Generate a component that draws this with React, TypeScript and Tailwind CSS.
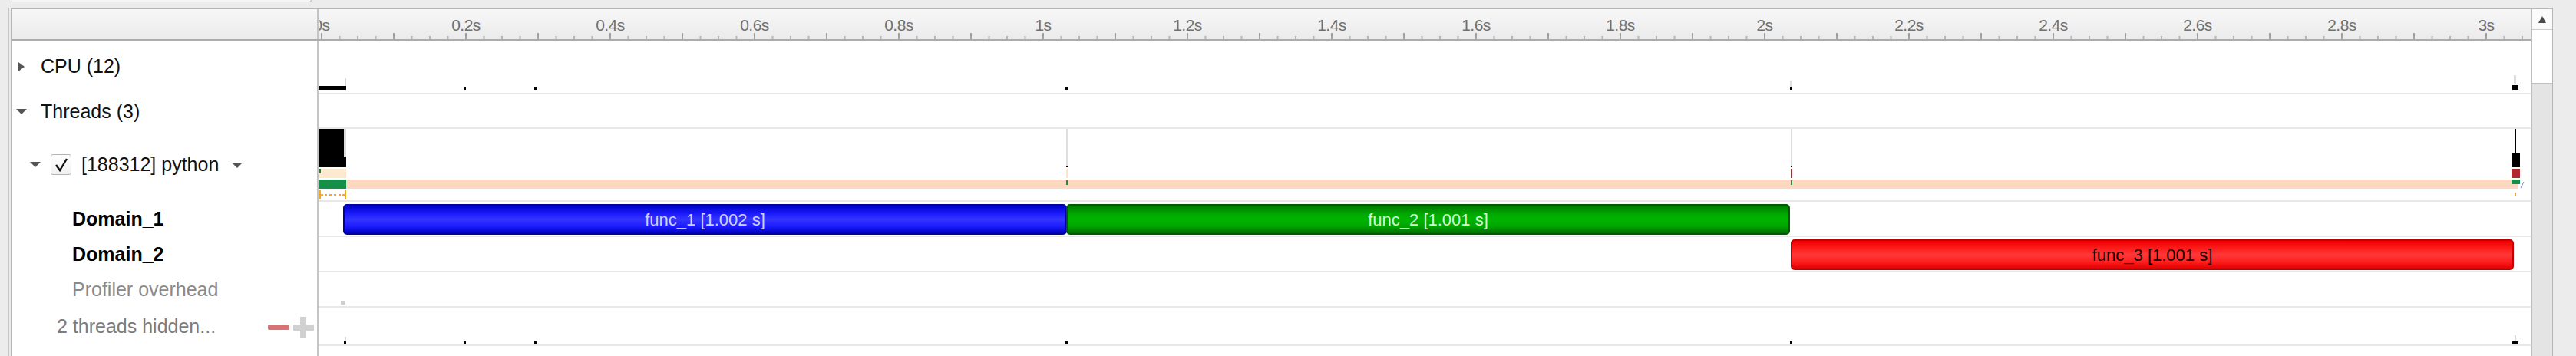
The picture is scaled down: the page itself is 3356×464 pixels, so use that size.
import React from "react";

// page x of the timeline's left edge; 0s sits 4px in, 940px per second
const ORIGIN = 418;
const PX_PER_S = 940;
const t2x = (t: number) => 4 + PX_PER_S * t;
const p = (pageX: number) => pageX - ORIGIN;

interface Slice {
  id: number;
  name: string;
  from: number;
  to: number;
  kind: "blue" | "green" | "red";
}

const slices: Slice[] = [
  { id: 1, name: "func_1 [1.002 s]", from: 450, to: 1393, kind: "blue" },
  { id: 2, name: "func_2 [1.001 s]", from: 1392, to: 2335, kind: "green" },
  { id: 3, name: "func_3 [1.001 s]", from: 2336, to: 3278, kind: "red" },
];

const sliceStyles = {
  blue: "border-[#0000a0] bg-[linear-gradient(to_bottom,#0000c8_0%,#1c1cff_30%,#3636ff_50%,#1c1cff_75%,#0000c0_100%)] text-[#cfcfff]",
  green:
    "border-[#005a00] bg-[linear-gradient(to_bottom,#007a00_0%,#00a800_30%,#00b400_50%,#00a400_75%,#007000_100%)] text-[#d0f5d0]",
  red: "border-[#c00000] bg-[linear-gradient(to_bottom,#f00000_0%,#ff2020_30%,#ff3838_50%,#ff2020_75%,#e00000_100%)] text-[#220000]",
};

const labels = [0, 0.2, 0.4, 0.6, 0.8, 1, 1.2, 1.4, 1.6, 1.8, 2, 2.2, 2.4, 2.6, 2.8, 3];

// little marks: [pageX, width, top, height, colour]
type Mark = [number, number, number, number, string];

const cpuMarks: Mark[] = [
  [418, 36, 59, 5, "#000"],
  [452, 2, 49, 10, "#d6d6d6"],
  [607, 3, 61, 3, "#000"],
  [699, 3, 61, 3, "#000"],
  [1391, 3, 61, 3, "#000"],
  [2335, 3, 61, 3, "#000"],
  [2335, 2, 52, 8, "#dedede"],
  [3278, 3, 45, 12, "#dedede"],
  [3276, 8, 58, 6, "#000"],
];

const threadMarks: Mark[] = [
  [418, 33, 0, 36, "#000"],
  [451, 3, 0, 36, "#dcdcdc"],
  [418, 36, 36, 14, "#000"],
  [418, 36, 52, 12, "#fde9cf"],
  [418, 3, 52, 6, "#2f7d32"],
  [418, 2865, 66, 12, "#fbd8bf"],
  [418, 36, 66, 12, "#168f48"],
  [1392, 2, 0, 48, "#dedede"],
  [1392, 2, 48, 2, "#000"],
  [1392, 2, 52, 12, "#fde6c8"],
  [1392, 2, 67, 6, "#168f48"],
  [2336, 2, 0, 48, "#dedede"],
  [2336, 2, 48, 2, "#000"],
  [2336, 2, 52, 12, "#b0282f"],
  [2336, 2, 67, 6, "#168f48"],
  [3279, 2, 0, 32, "#000"],
  [3275, 11, 32, 18, "#000"],
  [3275, 11, 52, 12, "#b0282f"],
  [3275, 11, 66, 6, "#168f48"],
  [3279, 2, 83, 5, "#f0a830"],
];

const hiddenMarks: Mark[] = [
  [452, 2, 38, 6, "#dadada"],
  [451, 3, 44, 3, "#000"],
  [607, 3, 44, 3, "#000"],
  [699, 3, 44, 3, "#000"],
  [1391, 3, 44, 3, "#000"],
  [2335, 3, 44, 3, "#000"],
  [3279, 2, 36, 8, "#dadada"],
  [3276, 8, 44, 3, "#000"],
];

function Marks({ marks }: { marks: Mark[] }) {
  return (
    <>
      {marks.map(([x, w, top, h, c], i) => (
        <div
          key={i}
          className="absolute"
          style={{ left: p(x), width: w, top, height: h, background: c }}
        />
      ))}
    </>
  );
}

function Tri({ dir }: { dir: "right" | "down" }) {
  return dir === "right" ? (
    <svg width="10" height="14" viewBox="0 0 10 14" className="shrink-0">
      <polygon points="1,1 9,7 1,13" fill="#555" />
    </svg>
  ) : (
    <svg width="14" height="8" viewBox="0 0 14 8" className="shrink-0">
      <polygon points="0,0 14,0 7,7" fill="#555" />
    </svg>
  );
}

function Row({
  h,
  left,
  children,
}: {
  h: string;
  left?: React.ReactNode;
  children?: React.ReactNode;
}) {
  return (
    <div className={`flex shrink-0 ${h}`}>
      <div className="w-[399px] shrink-0 border-r-2 border-[#c4c4c4] bg-white flex items-center relative">
        {left}
      </div>
      <div className="flex-1 relative overflow-hidden bg-white border-b-2 border-[#e8e8e8]">
        {children}
      </div>
    </div>
  );
}

function Ruler() {
  const ticks = Array.from({ length: 124 }, (_, i) => i);
  return (
    <div className="flex-1 relative overflow-hidden">
      <svg width="2879" height="39" className="absolute left-0 top-0">
        {ticks.map((i) => {
          const x = t2x(i * 0.025);
          const tall = i % 4 === 0;
          return (
            <rect
              key={i}
              x={x - 1}
              y={tall ? 31 : 35}
              width="2"
              height={tall ? 8 : 4}
              fill={tall ? "#a2a2a2" : "#b4b4b4"}
            />
          );
        })}
      </svg>
      {labels.map((t) => (
        <div
          key={t}
          className="absolute top-[9px] -translate-x-1/2 text-[21px] leading-[24px] text-[#707070] tracking-[-0.5px]"
          style={{ left: t2x(t) }}
        >
          {`${t}s`}
        </div>
      ))}
    </div>
  );
}

export default function App() {
  return (
    <div className="w-[3356px] h-[464px] overflow-hidden bg-[#ececec] flex flex-col font-['Liberation_Sans',Arial,sans-serif]">
      {/* strip above the panel */}
      <div className="h-[10px] shrink-0 flex">
        <div className="ml-[15px] w-[391px] h-[3px] border-l border-r border-b border-[#bcbcbc] rounded-br-[5px] bg-[#f4f4f4]" />
      </div>

      <div className="flex flex-1 min-h-0 ml-[11px] w-[3315px] border-l border-[#c4c4c4] pl-[2px]">
        <div className="flex flex-1 min-w-0 border-l-2 border-t-2 border-r border-[#b6b6b6]">
          {/* main column */}
          <div className="flex-1 flex flex-col min-w-0">
            {/* header */}
            <div className="h-[41px] shrink-0 flex border-b-2 border-[#acacac] bg-[linear-gradient(to_bottom,#f7f7f7,#ebebeb)]">
              <div className="w-[399px] shrink-0 border-r-2 border-[#c4c4c4]" />
              <Ruler />
            </div>

            <Row
              h="h-[70px]"
              left={
                <div className="flex items-center pl-[7px] pb-[2px]">
                  <Tri dir="right" />
                  <span className="ml-[20px] text-[25px] text-[#111]">CPU (12)</span>
                </div>
              }
            >
              <Marks marks={cpuMarks} />
            </Row>

            <Row
              h="h-[45px]"
              left={
                <div className="flex items-center pl-[5px]">
                  <Tri dir="down" />
                  <span className="ml-[18px] text-[25px] text-[#111]">Threads (3)</span>
                </div>
              }
            />

            <Row
              h="h-[95px]"
              left={
                <div className="flex items-center pl-[23px] pb-[2px]">
                  <Tri dir="down" />
                  <div className="ml-[13px] w-[27px] h-[27px] border border-[#b4b4b4] rounded-[3px] bg-[linear-gradient(to_bottom,#ffffff,#f0f0f0)] flex items-center justify-center">
                    <svg width="20" height="20" viewBox="0 0 20 20">
                      <path d="M3 10 L8 17 L17 2" fill="none" stroke="#111" strokeWidth="2.4" />
                    </svg>
                  </div>
                  <span className="ml-[13px] text-[25px] text-[#111]">[188312] python</span>
                  <svg width="12" height="7" viewBox="0 0 12 7" className="ml-[18px] mt-[4px]">
                    <polygon points="0,0 12,0 6,6" fill="#555" />
                  </svg>
                </div>
              }
            >
              <Marks marks={threadMarks} />
              {/* orange bracket */}
              <div
                className="absolute top-[80px] h-[12px] flex items-center"
                style={{ left: p(419), width: 35 }}
              >
                <div className="w-[2px] h-full bg-[#f5a623]" />
                <div className="flex-1 h-[3px] border-t-[3px] border-dotted border-[#f5a623]" />
                <div className="w-[2px] h-full bg-[#f5a623]" />
              </div>
              <svg className="absolute top-[68px]" style={{ left: p(3286) }} width="6" height="10">
                <line x1="1" y1="9" x2="5" y2="1" stroke="#6b7fd8" strokeWidth="1" />
              </svg>
            </Row>

            <Row
              h="h-[46px]"
              left={<span className="ml-[78px] text-[25px] font-bold text-black">Domain_1</span>}
            >
              {slices.slice(0, 2).map((s) => (
                <Bar key={s.id} s={s} />
              ))}
            </Row>

            <Row
              h="h-[46px]"
              left={<span className="ml-[78px] text-[25px] font-bold text-black">Domain_2</span>}
            >
              <Bar s={slices[2]} />
            </Row>

            <Row
              h="h-[46px]"
              left={<span className="ml-[78px] text-[25px] text-[#8a8a8a]">Profiler overhead</span>}
            >
              <div className="absolute top-[37px] h-[5px] w-[6px] bg-[#cfcfcf]" style={{ left: p(447) }} />
            </Row>

            <Row
              h="h-[50px]"
              left={
                <div className="flex items-center w-full pr-[4px]">
                  <span className="ml-[58px] text-[25px] text-[#7c7c7c]">2 threads hidden...</span>
                  <div className="ml-auto w-[28px] h-[7px] rounded-[2px] bg-[#d67474]" />
                  <div className="ml-[5px] w-[27px] h-[27px] relative">
                    <div className="absolute left-0 top-[10px] w-[27px] h-[8px] bg-[#d0d0d0]" />
                    <div className="absolute left-[9px] top-0 w-[8px] h-[27px] bg-[#d0d0d0]" />
                  </div>
                </div>
              }
            >
              <Marks marks={hiddenMarks} />
            </Row>

            <div className="flex flex-1">
              <div className="w-[399px] shrink-0 border-r-2 border-[#c4c4c4] bg-white" />
              <div className="flex-1 bg-white" />
            </div>
          </div>

          {/* vertical scrollbar */}
          <div className="w-[28px] shrink-0 flex flex-col border-l-2 border-[#bdbdbd] bg-[#e4e4e4]">
            <div className="h-[27px] shrink-0 bg-[#fbfbfb] border-b border-[#cacaca] flex items-center justify-center">
              <svg width="10" height="9" viewBox="0 0 10 9">
                <polygon points="5,0 10,9 0,9" fill="#4a4a4a" />
              </svg>
            </div>
            <div className="h-[71px] shrink-0 bg-white border-b-2 border-[#c2c2c2]" />
          </div>
        </div>
      </div>
    </div>
  );
}

function Bar({ s }: { s: Slice }) {
  return (
    <div
      className={`absolute top-[3px] h-[40px] rounded-[5px] border-2 flex items-center justify-center text-[22px] ${sliceStyles[s.kind]}`}
      style={{ left: p(s.from), width: s.to - s.from }}
    >
      {s.name}
    </div>
  );
}
